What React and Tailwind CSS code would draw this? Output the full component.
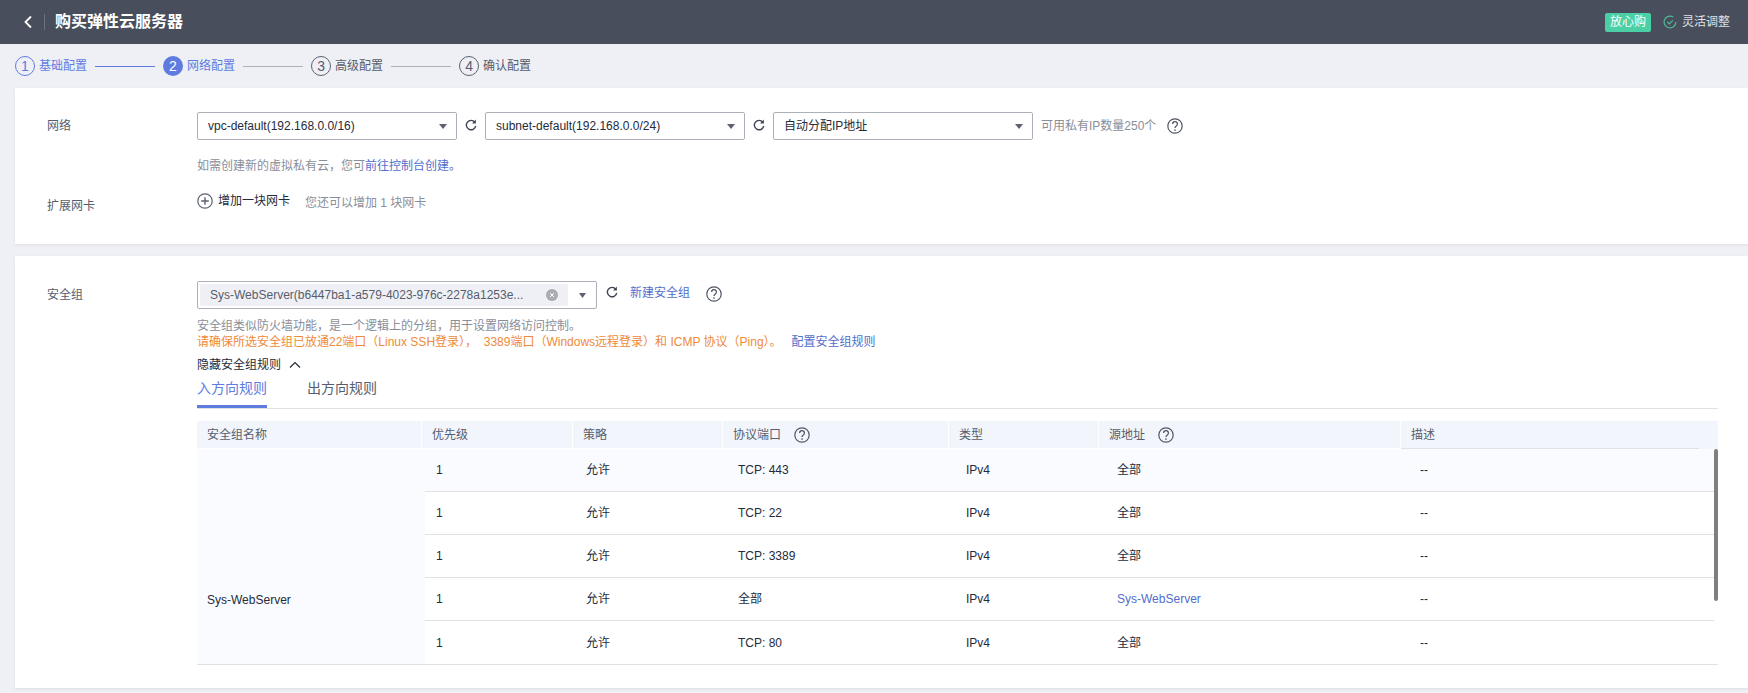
import React from "react";

const FONT = '"Liberation Sans", "Noto Sans CJK SC", sans-serif';

function Help({ className = "" }) {
  return (
    <svg width="16" height="16" viewBox="0 0 16 16" fill="none" className={`shrink-0 ${className}`}>
      <circle cx="8" cy="8" r="7.2" stroke="#4f5563" strokeWidth="1.2" />
      <path d="M5.6 6a2.4 2.4 0 1 1 3.7 2c-.9.6-1.3 1-1.3 2" stroke="#4f5563" strokeWidth="1.3" />
      <circle cx="8" cy="12" r=".85" fill="#4f5563" />
    </svg>
  );
}

function Refresh({ className = "" }) {
  return (
    <svg width="12" height="12" viewBox="0 0 12 12" fill="none" className={`shrink-0 ${className}`}>
      <path d="M9.8 3.2A4.7 4.7 0 1 0 10.7 7" stroke="#3f4452" strokeWidth="1.4" />
      <path d="M10.9 0.6v3.8H7.1z" fill="#3f4452" />
    </svg>
  );
}

function Caret({ small = false }) {
  return (
    <svg width={small ? 7 : 8} height={small ? 5 : 5} viewBox="0 0 8 5" preserveAspectRatio="none" className="shrink-0">
      <path d="M0 0h8L4 5z" fill="#5e6270" />
    </svg>
  );
}

function Select({ children }) {
  return (
    <div className="flex h-[28px] w-[260px] shrink-0 items-center justify-between rounded-[2px] border border-[#adb0b8] bg-white pl-[10px] pr-[9px] text-[12px] text-[#252b3a]">
      <span>{children}</span>
      <Caret />
    </div>
  );
}

const STEPS = [
  { n: "1", label: "基础配置", state: "done" },
  { n: "2", label: "网络配置", state: "active" },
  { n: "3", label: "高级配置", state: "todo" },
  { n: "4", label: "确认配置", state: "todo" },
];

function Steps() {
  return (
    <div className="flex h-[44px] items-center pl-[15px]">
      {STEPS.map((s, i) => (
        <div key={s.n} className="flex items-center">
          <div
            className={
              s.state === "active"
                ? "flex size-[20px] items-center justify-center rounded-full bg-[#5e7ce0] text-[14px] text-white"
                : s.state === "done"
                ? "flex size-[20px] items-center justify-center rounded-full border border-[#5e7ce0] text-[14px] text-[#5e7ce0]"
                : "flex size-[20px] items-center justify-center rounded-full border border-[#5e6270] text-[14px] text-[#575d6c]"
            }
          >
            {s.n}
          </div>
          <span className={`ml-[4px] text-[12px] ${s.state === "todo" ? "text-[#575d6c]" : "text-[#5e7ce0]"}`}>
            {s.label}
          </span>
          {i < 3 && (
            <div className={`mx-[8px] h-px w-[60px] ${s.state === "done" ? "bg-[#5e7ce0]" : "bg-[#adb0b8]"}`} />
          )}
        </div>
      ))}
    </div>
  );
}

const HEAD = [
  { t: "安全组名称", w: "w-[225px]" },
  { t: "优先级", w: "w-[151px]" },
  { t: "策略", w: "w-[150px]" },
  { t: "协议端口", w: "w-[226px]", help: true },
  { t: "类型", w: "w-[150px]" },
  { t: "源地址", w: "w-[302px]", help: true },
  { t: "描述", w: "flex-1" },
];

const ROWS = [
  { port: "TCP: 443", src: "全部" },
  { port: "TCP: 22", src: "全部" },
  { port: "TCP: 3389", src: "全部" },
  { port: "全部", src: "Sys-WebServer", link: true },
  { port: "TCP: 80", src: "全部" },
];

function RulesTable() {
  return (
    <div className="relative mt-[12px] text-[12px]">
      <div className="flex h-[28px] bg-[#f2f5fc] text-[#575d6c]">
        {HEAD.map((h, i) => (
          <div
            key={h.t}
            className={`flex items-center gap-[13px] pl-[10px] ${h.w} ${i < 6 ? "border-r border-white" : ""} border-b border-[#dfe1e6]`}
          >
            {h.t}
            {h.help && <Help />}
          </div>
        ))}
        <div className="w-[19px]" />
      </div>
      <div className="flex border-b border-[#dfe1e6]">
        <div className="w-[228px] bg-[#f9fbff] pl-[10px] pt-[143px] leading-[16px] text-[#252b3a]">Sys-WebServer</div>
        <div className="flex-1 pr-[4px]">
          {ROWS.map((r, i) => (
            <div
              key={i}
              className={`flex h-[43px] items-center text-[#252b3a] ${i < 4 ? "border-b border-[#dfe1e6]" : ""} ${i === 0 ? "bg-[#f9fbff]" : ""}`}
            >
              <div className="w-[150px] pl-[11px]">1</div>
              <div className="w-[152px] pl-[11px]">允许</div>
              <div className="w-[228px] pl-[11px]">{r.port}</div>
              <div className="w-[151px] pl-[11px]">IPv4</div>
              <div className={`w-[303px] pl-[11px] ${r.link ? "text-[#526ecc]" : ""}`}>{r.src}</div>
              <div className="flex-1 pl-[11px]">--</div>
            </div>
          ))}
        </div>
      </div>
      <div className="absolute right-0 top-[28px] h-[152px] w-[4px] rounded-[2px] bg-[#7f7f7f]" />
    </div>
  );
}

export default function App() {
  return (
    <div className="h-[693px] overflow-hidden bg-[#eff0f5]" style={{ fontFamily: FONT }}>
      <header className="flex h-[44px] items-center justify-between bg-[#484e5b] pl-[23px] pr-[18px]">
        <div className="flex items-center">
          <svg width="10" height="14" viewBox="0 0 10 14" fill="none">
            <path d="M8 1.5 2.5 7 8 12.5" stroke="#ffffff" strokeWidth="1.8" />
          </svg>
          <div className="ml-[11px] h-[16px] w-px bg-[#6c7280]" />
          <h1 className="ml-[10px] text-[16px] font-bold text-white">购买弹性云服务器</h1>
        </div>
        <div className="flex items-center">
          <span className="flex h-[19px] w-[46px] items-center justify-center rounded-[2px] bg-[#4bd0a6] text-[12px] text-white">
            放心购
          </span>
          <svg width="14" height="14" viewBox="0 0 14 14" fill="none" className="ml-[12px]">
            <path d="M12.9 7A5.9 5.9 0 1 1 10.3 2.1" stroke="#4fb898" strokeWidth="1.2" />
            <path d="M4.3 7 6.3 9 9.8 5.4" stroke="#4fb898" strokeWidth="1.2" />
          </svg>
          <span className="ml-[5px] text-[12px] text-[#dfe1e6]">灵活调整</span>
        </div>
      </header>

      <Steps />

      <section className="ml-[15px] h-[156px] bg-white pl-[32px] pr-[30px] pt-[24px] shadow-[0_1px_3px_rgba(0,0,0,0.08)]">
        <div className="flex">
          <div className="flex h-[28px] w-[150px] shrink-0 items-center text-[12px] text-[#575d6c]">网络</div>
          <div className="flex items-center">
            <Select>vpc-default(192.168.0.0/16)</Select>
            <Refresh className="mx-[8px] -translate-y-[1px]" />
            <Select>subnet-default(192.168.0.0/24)</Select>
            <Refresh className="mx-[8px] -translate-y-[1px]" />
            <Select>自动分配IP地址</Select>
            <span className="ml-[8px] text-[12px] text-[#8a8e99]">可用私有IP数量250个</span>
            <Help className="ml-[11px]" />
          </div>
        </div>
        <p className="ml-[150px] mt-[18px] text-[12px] leading-[16px] text-[#8a8e99]">
          如需创建新的虚拟私有云，您可<span className="text-[#526ecc]">前往控制台创建。</span>
        </p>
        <div className="mt-[19px] flex items-start">
          <div className="w-[150px] shrink-0 pt-[5px] text-[12px] leading-[16px] text-[#575d6c]">扩展网卡</div>
          <div className="flex h-[16px] items-center text-[12px] leading-[16px]">
            <svg width="16" height="16" viewBox="0 0 16 16" fill="none">
              <circle cx="8" cy="8" r="7.2" stroke="#5e6270" strokeWidth="1.2" />
              <path d="M8 4.2v7.6M4.2 8h7.6" stroke="#5e6270" strokeWidth="1.4" />
            </svg>
            <span className="ml-[5px] text-[#252b3a]">增加一块网卡</span>
            <span className="ml-[15px] mt-[3px] text-[#8a8e99]">您还可以增加 1 块网卡</span>
          </div>
        </div>
      </section>

      <section className="ml-[15px] mt-[12px] h-[432px] bg-white pl-[32px] pr-[30px] pt-[25px] shadow-[0_1px_3px_rgba(0,0,0,0.08)]">
        <div className="flex">
          <div className="flex h-[28px] w-[150px] shrink-0 items-center text-[12px] text-[#575d6c]">安全组</div>
          <div className="flex-1">
            <div className="flex items-center">
              <div className="flex h-[28px] w-[400px] items-center rounded-[2px] border border-[#adb0b8] pl-[2px]">
                <div className="flex h-[22px] w-[368px] items-center justify-between rounded-[2px] bg-[#eff0f5] pl-[10px] pr-[10px] text-[12px] text-[#575d6c]">
                  <span>Sys-WebServer(b6447ba1-a579-4023-976c-2278a1253e...</span>
                  <svg width="12" height="12" viewBox="0 0 12 12">
                    <circle cx="6" cy="6" r="6" fill="#a8abb3" />
                    <path d="M4 4l4 4M8 4l-4 4" stroke="#ffffff" strokeWidth="1" />
                  </svg>
                </div>
                <div className="flex flex-1 justify-center">
                  <Caret small />
                </div>
              </div>
              <Refresh className="ml-[9px] -translate-y-[3px]" />
              <span className="ml-[12px] -translate-y-[2px] text-[12px] text-[#526ecc]">新建安全组</span>
              <Help className="ml-[16px] -translate-y-[1px]" />
            </div>
            <p className="mt-[9px] text-[12px] leading-[16px] text-[#8a8e99]">
              安全组类似防火墙功能，是一个逻辑上的分组，用于设置网络访问控制。
            </p>
            <p className="text-[12px] leading-[16px] text-[#ee8a3a]">
              请确保所选安全组已放通22端口（Linux SSH登录），{"\u00a0\u00a0"}3389端口（Windows远程登录）和 ICMP 协议（Ping）。{"\u00a0\u00a0\u00a0"}
              <span className="text-[#526ecc]">配置安全组规则</span>
            </p>
            <div className="mt-[7px] flex items-center text-[12px] leading-[16px] text-[#252b3a]">
              隐藏安全组规则
              <svg width="12" height="8" viewBox="0 0 12 8" fill="none" className="ml-[8px]">
                <path d="M1 6.5 6 1.5l5 5" stroke="#252b3a" strokeWidth="1.2" />
              </svg>
            </div>
            <div className="mt-[5px] flex gap-[40px] border-b border-[#dfe1e6] text-[14px] leading-[20px]">
              <div className="w-[70px] border-b-[3px] border-[#5e7ce0] pb-[7px] text-[#5e7ce0]">入方向规则</div>
              <div className="text-[#575d6c]">出方向规则</div>
            </div>
            <RulesTable />
          </div>
        </div>
      </section>
    </div>
  );
}
